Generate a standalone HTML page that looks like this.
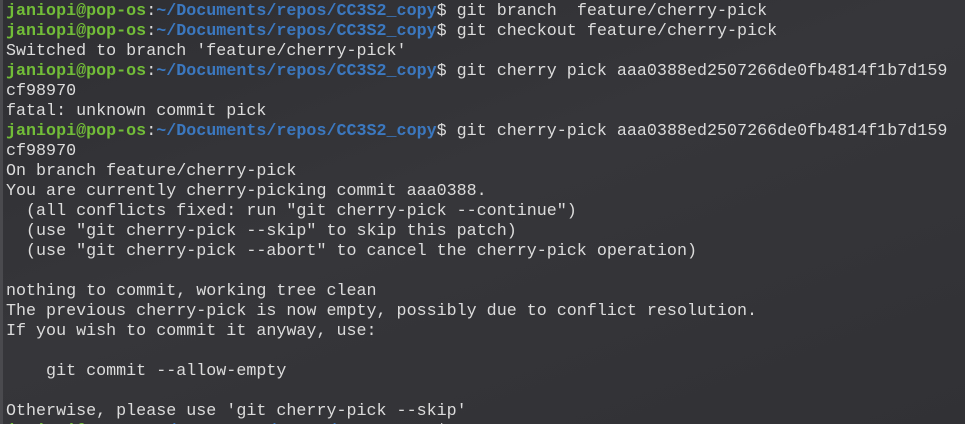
<!DOCTYPE html>
<html><head><meta charset="utf-8"><style>
html,body{margin:0;padding:0;width:965px;height:424px;overflow:hidden;}
body{background:linear-gradient(160deg,#2f2f33 0%,#36363a 45%,#313135 100%);position:relative;}
.bar{position:absolute;left:0;top:0;width:3px;height:424px;background:#4a4a4e;}
pre{margin:0;position:absolute;left:6px;top:2px;font-family:"Liberation Mono",monospace;font-size:16.7px;line-height:20px;color:#dcdcdc;white-space:pre;}
.g{color:#72bd38;font-weight:bold;}
.b{color:#3b78c0;font-weight:bold;}
</style></head><body><div class="bar"></div><pre><span class="g">janiopi@pop-os</span>:<span class="b">~/Documents/repos/CC3S2_copy</span>$ git branch  feature/cherry-pick
<span class="g">janiopi@pop-os</span>:<span class="b">~/Documents/repos/CC3S2_copy</span>$ git checkout feature/cherry-pick
Switched to branch 'feature/cherry-pick'
<span class="g">janiopi@pop-os</span>:<span class="b">~/Documents/repos/CC3S2_copy</span>$ git cherry pick aaa0388ed2507266de0fb4814f1b7d159
cf98970
fatal: unknown commit pick
<span class="g">janiopi@pop-os</span>:<span class="b">~/Documents/repos/CC3S2_copy</span>$ git cherry-pick aaa0388ed2507266de0fb4814f1b7d159
cf98970
On branch feature/cherry-pick
You are currently cherry-picking commit aaa0388.
  (all conflicts fixed: run "git cherry-pick --continue")
  (use "git cherry-pick --skip" to skip this patch)
  (use "git cherry-pick --abort" to cancel the cherry-pick operation)

nothing to commit, working tree clean
The previous cherry-pick is now empty, possibly due to conflict resolution.
If you wish to commit it anyway, use:

    git commit --allow-empty

Otherwise, please use 'git cherry-pick --skip'
<span class="g">janiopi@pop-os</span>:<span class="b">~/Documents/repos/CC3S2_copy</span>$</pre></body></html>
